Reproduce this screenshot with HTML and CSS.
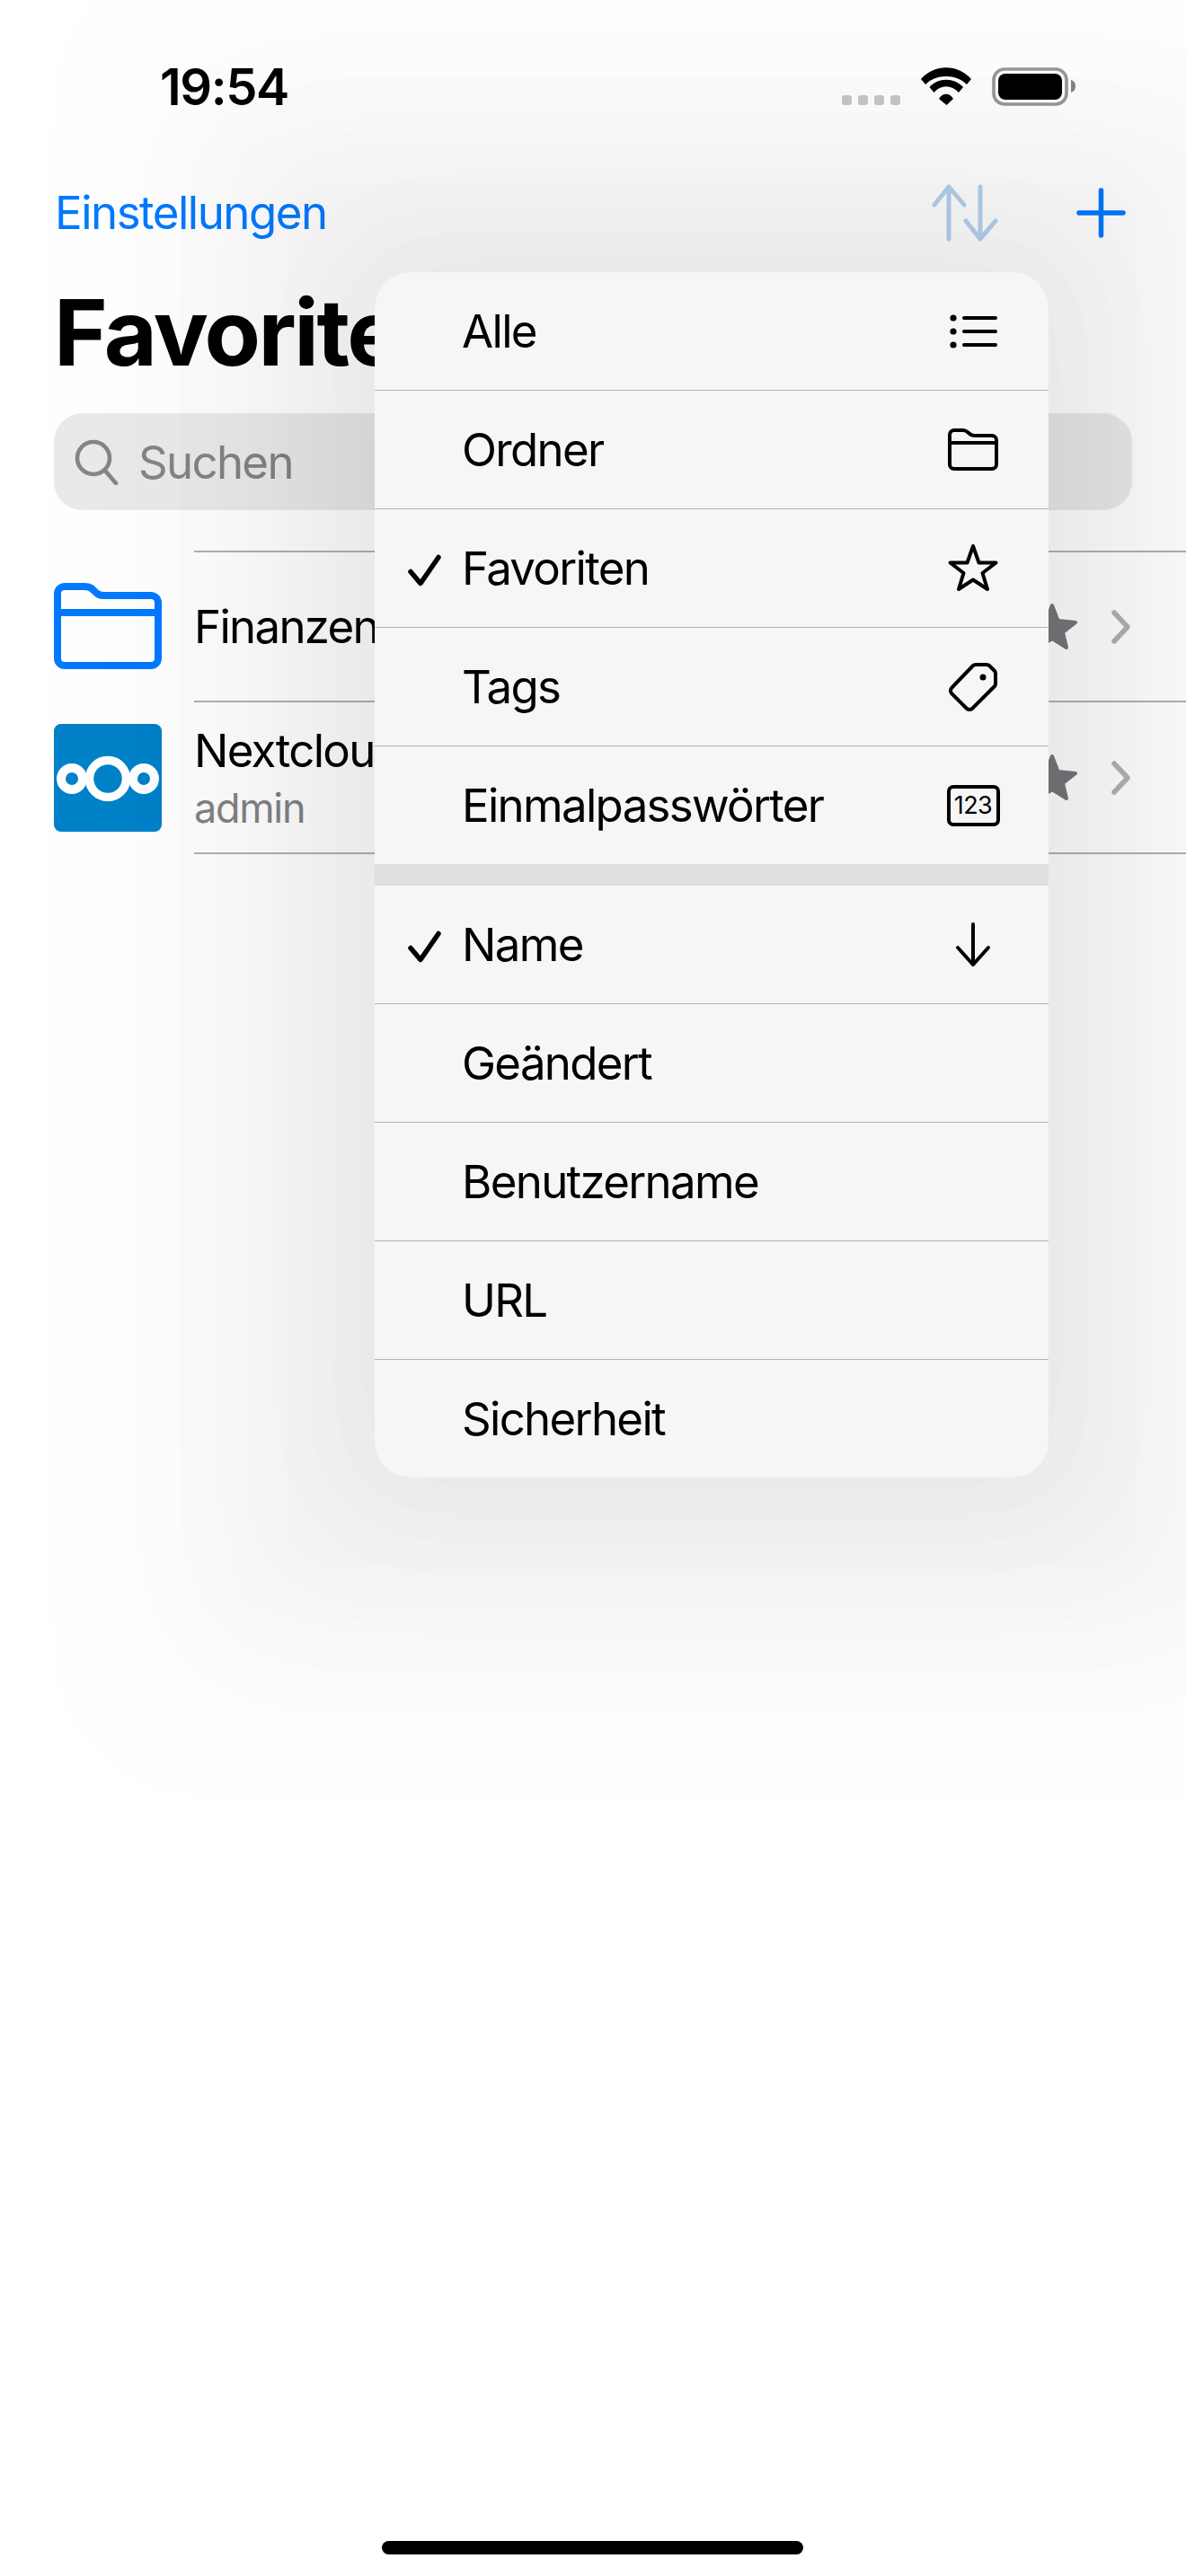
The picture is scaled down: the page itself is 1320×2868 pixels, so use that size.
FILE: index.html
```html
<!DOCTYPE html>
<html lang="de">
<head>
<meta charset="utf-8">
<title>Favoriten</title>
<link rel="stylesheet" href="styles.css">
</head>
<body>
<div class="phone">
  <header class="status">
    <span class="time">19:54</span>
    <div class="status-icons">
      <svg class="signal" width="65" height="11" viewBox="0 0 65 11"><g fill="#c8c8c8"><rect width="11" height="11" rx="3"/><rect x="18" width="11" height="11" rx="3"/><rect x="36" width="11" height="11" rx="3"/><rect x="54" width="11" height="11" rx="3"/></g></svg>
      <svg class="wifi" width="58" height="42" viewBox="0 0 58 42"><path d="M1 13C16-4 42-4 57 13L52 19C40 7 18 7 6 19Z M10.5 22C20 11 38 11 48 22L43 28C35 19 23 19 15.5 28Z M21 35C25 28 33 28 37 35L29.5 42Z"/></svg>
      <svg class="battery" width="94" height="43" viewBox="0 0 94 43"><rect x="2" y="2" width="81" height="39" rx="12" fill="#fff" stroke="#999" stroke-width="3.6"/><rect x="7" y="7" width="71" height="29" rx="8"/><path d="M88 14C91 15 93 17 93 21C93 25 91 27 88 28Z" fill="#888"/></svg>
    </div>
  </header>

  <nav class="nav">
    <a class="nav-link">Einstellungen</a>
    <div class="nav-actions">
      <svg width="75" height="64" viewBox="0 0 75 64" fill="none" stroke="#b9d3ef" stroke-width="5" stroke-linecap="round" stroke-linejoin="round"><path d="M19 3V61M3 23L19 3L36 23"/><path d="M54 3V61M38 41L54 61L71 41"/></svg>
      <svg width="55" height="56" viewBox="0 0 55 56" fill="none" stroke="#007aff" stroke-width="5.5" stroke-linecap="round"><path d="M27.5 3V53M3 28H52"/></svg>
    </div>
  </nav>

  <h1 class="title">Favoriten</h1>

  <div class="search">
    <svg width="52" height="52" viewBox="0 0 52 52" fill="none" stroke="#85858a" stroke-width="4.6" stroke-linecap="round"><circle cx="22" cy="22" r="18"/><path d="M35 36L47 50"/></svg>
    <span>Suchen</span>
  </div>

  <ul class="list">
    <li class="row">
      <svg class="row-icon" width="120" height="96" viewBox="0 0 120 96" fill="none" stroke="#007aff" stroke-width="8"><path d="M4 84V12A8 8 0 0 1 12 4H34C40 4 42 6 45 9C48 12 50 14 56 14H108A8 8 0 0 1 116 22V84A8 8 0 0 1 108 92H12A8 8 0 0 1 4 84ZM4 33H116"/></svg>
      <div class="row-body">
        <div class="row-text"><span class="row-title">Finanzen</span></div>
        <svg class="row-star" width="60" height="56" viewBox="0 0 60 56"><polygon points="29,4 35.5,21 55,23 41,34 45,51 29,41 13,51 17,34 3,23 22.5,21" fill="#77787b" stroke="#77787b" stroke-width="4" stroke-linejoin="round"/></svg>
        <svg class="row-chevron" width="24" height="40" viewBox="0 0 24 40" fill="none" stroke="#b5b5b5" stroke-width="5.5" stroke-linecap="round" stroke-linejoin="round"><path d="M5 4L20 20L5 36"/></svg>
      </div>
    </li>
    <li class="row">
      <svg class="row-icon" width="120" height="120" viewBox="0 0 120 120"><rect width="120" height="120" rx="8" fill="#0082c9"/><g fill="none" stroke="#fff"><circle cx="60" cy="61" r="20.5" stroke-width="9.5"/><circle cx="20" cy="61" r="12" stroke-width="10"/><circle cx="100" cy="61" r="12" stroke-width="10"/></g></svg>
      <div class="row-body">
        <div class="row-text row-text-double"><span class="row-title">Nextcloud</span><span class="row-sub">admin</span></div>
        <svg class="row-star" width="60" height="56" viewBox="0 0 60 56"><polygon points="29,4 35.5,21 55,23 41,34 45,51 29,41 13,51 17,34 3,23 22.5,21" fill="#77787b" stroke="#77787b" stroke-width="4" stroke-linejoin="round"/></svg>
        <svg class="row-chevron" width="24" height="40" viewBox="0 0 24 40" fill="none" stroke="#b5b5b5" stroke-width="5.5" stroke-linecap="round" stroke-linejoin="round"><path d="M5 4L20 20L5 36"/></svg>
      </div>
    </li>
  </ul>

  <div class="home-bar"></div>

  <div class="menu">
    <ul class="menu-group">
      <li class="menu-item"><span class="menu-check"></span><span class="menu-label">Alle</span>
        <span class="menu-icon"><svg width="60" height="40" viewBox="0 0 60 40"><g fill="#000"><circle cx="8" cy="5" r="3.6"/><circle cx="8" cy="20" r="3.6"/><circle cx="8" cy="35" r="3.6"/></g><path d="M20 5H55M20 20H55M20 35H55" stroke="#000" stroke-width="4" stroke-linecap="round"/></svg></span></li>
      <li class="menu-item"><span class="menu-check"></span><span class="menu-label">Ordner</span>
        <span class="menu-icon"><svg width="56" height="47" viewBox="0 0 56 47" fill="none" stroke="#000" stroke-width="4"><path d="M2 40V7A5 5 0 0 1 7 2H17C20 2 21 3 23 5C25 7 26 8 29 8H49A5 5 0 0 1 54 13V40A5 5 0 0 1 49 45H7A5 5 0 0 1 2 40ZM2 16H54"/></svg></span></li>
      <li class="menu-item"><span class="menu-check"><svg width="40" height="40" viewBox="0 0 40 40" fill="none" stroke="#000" stroke-width="5.5" stroke-linecap="round" stroke-linejoin="round"><path d="M4 23.5L15 36.5L35 7.5"/></svg></span><span class="menu-label">Favoriten</span>
        <span class="menu-icon"><svg width="60" height="58" viewBox="0 0 60 58" fill="none" stroke="#000" stroke-width="4" stroke-linejoin="round"><polygon points="30,4 36.5,22.5 55.5,22.5 40.5,34 46,52 30,41.5 14,52 19.5,34 4.5,22.5 23.5,22.5"/></svg></span></li>
      <li class="menu-item"><span class="menu-check"></span><span class="menu-label">Tags</span>
        <span class="menu-icon"><svg width="56" height="56" viewBox="0 0 56 56" fill="none" stroke="#000" stroke-width="4"><path d="M31 3H43Q45 3 46 4L52 10Q53 11 53 13V24Q53 26 52 27L27 52Q24 54 21 52L4 35Q2 32 4 29L28 4Q29 3 31 3Z"/><circle cx="39" cy="17" r="3.5" fill="#000" stroke="none"/></svg></span></li>
      <li class="menu-item"><span class="menu-check"></span><span class="menu-label">Einmalpasswörter</span>
        <span class="menu-icon"><span class="otp-badge">123</span></span></li>
    </ul>
    <ul class="menu-group">
      <li class="menu-item"><span class="menu-check"><svg width="40" height="40" viewBox="0 0 40 40" fill="none" stroke="#000" stroke-width="5.5" stroke-linecap="round" stroke-linejoin="round"><path d="M4 23.5L15 36.5L35 7.5"/></svg></span><span class="menu-label">Name</span>
        <span class="menu-icon"><svg width="40" height="50" viewBox="0 0 40 50" fill="none" stroke="#000" stroke-width="4" stroke-linecap="round" stroke-linejoin="round"><path d="M20 2V47M3 28L20 47L37 28"/></svg></span></li>
      <li class="menu-item"><span class="menu-check"></span><span class="menu-label">Geändert</span><span class="menu-icon"></span></li>
      <li class="menu-item"><span class="menu-check"></span><span class="menu-label">Benutzername</span><span class="menu-icon"></span></li>
      <li class="menu-item"><span class="menu-check"></span><span class="menu-label">URL</span><span class="menu-icon"></span></li>
      <li class="menu-item"><span class="menu-check"></span><span class="menu-label">Sicherheit</span><span class="menu-icon"></span></li>
    </ul>
  </div>
</div>
</body>
</html>
```
FILE: styles.css
```css
* { box-sizing: border-box; }
html, body { margin: 0; padding: 0; background: #fff; }
body { font-family: Inter, "Liberation Sans", sans-serif; color: #000; }
ul { list-style: none; margin: 0; padding: 0; }
svg { display: block; flex: none; }

.phone {
  position: relative;
  width: 1320px;
  height: 2868px;
  overflow: hidden;
  display: flex;
  flex-direction: column;
  background: #fff;
}

.status {
  height: 177px;
  padding: 75px 122px 0 178px;
  display: flex;
  justify-content: space-between;
  align-items: flex-start;
}
.time { font-size: 56px; font-weight: 600; line-height: 44px; letter-spacing: -1.4px; }
.status-icons { display: flex; align-items: flex-end; gap: 22px; }
.signal, .wifi { margin-bottom: 1px; }

.nav {
  height: 120px;
  padding: 0 67px 0 61px;
  display: flex;
  justify-content: space-between;
  align-items: center;
}
.nav-link { font-size: 51px; line-height: 60px; letter-spacing: -1.5px; color: #007aff; }
.nav-actions { display: flex; align-items: center; gap: 86px; }

.title {
  margin: 0;
  padding-left: 60px;
  font-size: 102px;
  font-weight: 700;
  line-height: 146px;
  letter-spacing: -2.5px;
}

.search {
  margin: 17px 60px 0;
  height: 108px;
  padding-left: 22px;
  display: flex;
  align-items: center;
  gap: 20px;
  border-radius: 32px;
  background: rgba(118, 118, 128, 0.155);
  color: #85858a;
  font-size: 51px;
  letter-spacing: -1.7px;
}

.list { margin-top: 45px; }
.row { display: flex; align-items: center; padding-left: 60px; }
.row-icon { margin-right: 36px; }
.row-body {
  flex: 1;
  height: 167px;
  padding-right: 61px;
  display: flex;
  align-items: center;
  border-top: 2px solid #b4b4b4;
}
.row:last-child .row-body { height: 171px; border-bottom: 2px solid #b4b4b4; }
.row-text { flex: 1; display: flex; flex-direction: column; }
.row-text-double { padding-top: 5px; }
.row-title { font-size: 51px; line-height: 60px; letter-spacing: -1.7px; }
.row-sub { font-size: 45px; line-height: 60px; letter-spacing: -1.3px; color: #858589; margin-top: 4px; }
.row-chevron { margin-left: 33px; }

.home-bar {
  margin: auto 0 24px 425px;
  width: 469px;
  height: 15px;
  border-radius: 8px;
  background: #000;
}

.menu {
  position: absolute;
  left: 417px;
  top: 303px;
  width: 750px;
  border-radius: 40px;
  background: #e0e0e0;
  box-shadow:
    0 0 120px -120px rgba(0, 0, 0, 0.05),
    0 0 120px -60px rgba(0, 0, 0, 0.025),
    0 0 120px 0 rgba(0, 0, 0, 0.02),
    0 0 120px 60px rgba(0, 0, 0, 0.02),
    0 0 120px 120px rgba(0, 0, 0, 0.018),
    0 0 120px 180px rgba(0, 0, 0, 0.016),
    0 0 120px 240px rgba(0, 0, 0, 0.012),
    0 0 120px 300px rgba(0, 0, 0, 0.008),
    0 0 120px 360px rgba(0, 0, 0, 0.006);
  display: flex;
  flex-direction: column;
  gap: 24px;
}
.menu-group { background: #f6f6f6; }
.menu-group:first-child { border-radius: 40px 40px 0 0; }
.menu-group:last-child { border-radius: 0 0 40px 40px; }
.menu-item {
  height: 132px;
  display: grid;
  grid-template-columns: 97px 1fr 60px;
  align-items: center;
  padding-right: 54px;
  border-bottom: 1.5px solid #b4b4b4;
}
.menu-item:last-child { height: 131px; border-bottom: 0; }
.menu-check { padding-left: 36px; }
.menu-label { font-size: 51px; line-height: 60px; letter-spacing: -1.7px; }
.menu-icon { display: flex; justify-content: center; align-items: center; }
.otp-badge {
  width: 59px;
  height: 46px;
  flex: none;
  border: 4px solid #000;
  border-radius: 7px;
  font-size: 27px;
  line-height: 38px;
  text-align: center;
  letter-spacing: -0.5px;
}
```
